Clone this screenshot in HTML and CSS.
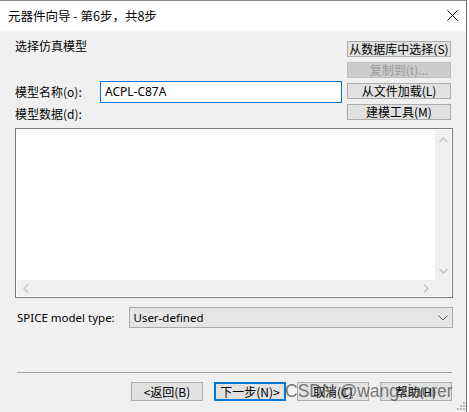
FILE: index.html
```html
<!DOCTYPE html>
<html lang="zh-CN">
<head>
<meta charset="utf-8">
<title>元器件向导</title>
<link rel="stylesheet" href="styles.css">
</head>
<body>
<div class="window">
  <div class="titlebar">
    <span class="title">元器件向导 - 第6步，共8步</span>
    <svg class="close" width="11" height="11" viewBox="0 0 11 11"><path d="M0.5 0.5 L10.5 10.5 M10.5 0.5 L0.5 10.5" stroke="#000" stroke-width="1" fill="none"/></svg>
  </div>
  <div class="content">
    <div class="top">
      <div class="left">
        <div class="heading">选择仿真模型</div>
        <div class="name-row">
          <span class="label">模型名称(o):</span>
          <div class="input">ACPL-C87A</div>
        </div>
        <div class="data-label">模型数据(d):</div>
      </div>
      <div class="actions">
        <div class="btn">从数据库中选择(S)</div>
        <div class="btn disabled">复制到(t)...</div>
        <div class="btn">从文件加载(L)</div>
        <div class="btn">建模工具(M)</div>
      </div>
    </div>
    <div class="textarea">
      <div class="ta-main">
        <div class="ta-white"></div>
        <div class="vscroll">
          <svg width="9" height="6" viewBox="0 0 9 6"><path d="M0.5 5 L4.5 1 L8.5 5" stroke="#c2c2c2" stroke-width="1.4" fill="none"/></svg>
          <svg width="9" height="6" viewBox="0 0 9 6"><path d="M0.5 1 L4.5 5 L8.5 1" stroke="#c2c2c2" stroke-width="1.4" fill="none"/></svg>
        </div>
      </div>
      <div class="hscroll">
        <svg width="6" height="9" viewBox="0 0 6 9"><path d="M5 0.5 L1 4.5 L5 8.5" stroke="#c2c2c2" stroke-width="1.4" fill="none"/></svg>
        <svg width="6" height="9" viewBox="0 0 6 9"><path d="M1 0.5 L5 4.5 L1 8.5" stroke="#c2c2c2" stroke-width="1.4" fill="none"/></svg>
      </div>
    </div>
    <div class="spice-row">
      <span class="spice-label">SPICE model type:</span>
      <div class="select">
        <span>User-defined</span>
        <svg width="10" height="6" viewBox="0 0 10 6"><path d="M0.5 0.5 L5 5 L9.5 0.5" stroke="#555" stroke-width="1" fill="none"/></svg>
      </div>
    </div>
    <div class="sep"></div>
    <div class="footer">
      <div class="fbtn">&lt;返回(B)</div>
      <div class="fbtn default">下一步(N)&gt;</div>
      <div class="fbtn">取消(C)</div>
      <div class="fbtn">帮助(H)</div>
    </div>
  </div>
  <div class="watermark">CSDN @wangxiaorer</div>
  <svg class="grip" width="8" height="8" viewBox="0 0 8 8">
    <rect x="6" y="0" width="2" height="2" fill="#b8b8b8"/>
    <rect x="3" y="3" width="2" height="2" fill="#b8b8b8"/>
    <rect x="6" y="3" width="2" height="2" fill="#b8b8b8"/>
    <rect x="0" y="6" width="2" height="2" fill="#b8b8b8"/>
    <rect x="3" y="6" width="2" height="2" fill="#b8b8b8"/>
    <rect x="6" y="6" width="2" height="2" fill="#b8b8b8"/>
  </svg>
</div>
</body>
</html>
```

FILE: styles.css
```css
html, body {
  margin: 0;
  padding: 0;
  background: #ffffff;
}
body {
  width: 469px;
  height: 412px;
  overflow: hidden;
  font-family: "Noto Sans", "Noto Sans CJK SC", sans-serif;
  font-size: 12px;
  color: #000;
}
.window {
  position: relative;
  width: 466px;
  height: 411px;
  border-top: 1px solid #8a8a8a;
  border-right: 1px solid #6f6f6f;
  background: #f0f0f0;
  overflow: hidden;
}
.titlebar {
  height: 30px;
  background: #fff;
  display: flex;
  align-items: center;
  justify-content: space-between;
  padding: 0 8px 0 8px;
}
.title {
  font-family: "Noto Sans CJK SC", sans-serif;
  font-size: 12.5px;
  line-height: 16px;
}
.close {
  display: block;
  margin-top: -1px;
}
.content {
  padding: 0 13px 0 15px;
}
.top {
  display: flex;
  padding-top: 7px;
}
.left {
  flex: 1;
}
.heading {
  line-height: 16px;
  font-family: "Noto Sans CJK SC", sans-serif;
}
.name-row {
  display: flex;
  align-items: center;
  margin-top: 27px;
}
.label {
  width: 85px;
  line-height: 16px;
  font-family: "Noto Sans CJK SC", sans-serif;
}
.input {
  box-sizing: border-box;
  width: 242px;
  height: 22px;
  border: 1px solid #0078d7;
  background: #fff;
  padding: 0 4px;
  line-height: 20px;
}
.data-label {
  margin-top: 3px;
  line-height: 16px;
  font-family: "Noto Sans CJK SC", sans-serif;
}
.actions {
  display: flex;
  flex-direction: column;
  gap: 5px;
  margin-top: 3px;
  margin-right: 2px;
  width: 104px;
}
.btn {
  box-sizing: border-box;
  height: 16px;
  background: #e1e1e1;
  border: 1px solid #adadad;
  text-align: center;
  line-height: 13px;
  font-family: "Noto Sans CJK SC", sans-serif;
  white-space: nowrap;
  overflow: hidden;
}
.btn.disabled {
  background: #cccccc;
  border-color: #bfbfbf;
  color: #9a9a9a;
}
.textarea {
  box-sizing: border-box;
  margin-top: 6px;
  width: 438px;
  height: 170px;
  border: 1px solid #7a7a7a;
  background: #fff;
  padding: 1px;
  display: flex;
  flex-direction: column;
}
.ta-main {
  flex: 1;
  display: flex;
}
.ta-white {
  flex: 1;
  background: #fff;
}
.vscroll {
  width: 16px;
  background: #f0f0f0;
  display: flex;
  flex-direction: column;
  align-items: center;
  justify-content: space-between;
  padding: 7px 0 6px;
}
.vscroll svg, .hscroll svg {
  display: block;
}
.hscroll {
  height: 16px;
  background: #f0f0f0;
  display: flex;
  align-items: center;
  justify-content: space-between;
  padding: 0 22px 0 6px;
}
.spice-row {
  display: flex;
  align-items: center;
  margin-top: 9px;
  margin-left: 2px;
}
.spice-label {
  width: 113px;
  font-size: 11.5px;
  line-height: 16px;
}
.select {
  box-sizing: border-box;
  width: 325px;
  height: 21px;
  background: #e5e5e5;
  border: 1px solid #acacac;
  display: flex;
  align-items: center;
  justify-content: space-between;
  padding: 0 4px 0 3px;
  font-size: 11.5px;
}
.select svg {
  display: block;
}
.sep {
  margin: 44px 0 0 2px;
  width: 435px;
  height: 1px;
  background: #a0a0a0;
}
.footer {
  display: flex;
  justify-content: flex-end;
  gap: 11px;
  margin-top: 9px;
  margin-right: 1px;
}
.fbtn {
  box-sizing: border-box;
  width: 72px;
  height: 19px;
  background: #e1e1e1;
  border: 1px solid #adadad;
  text-align: center;
  line-height: 17px;
  font-family: "Noto Sans CJK SC", sans-serif;
  white-space: nowrap;
}
.fbtn.default {
  border: 2px solid #0078d7;
  line-height: 15px;
}
.watermark {
  position: absolute;
  left: 285px;
  top: 380px;
  z-index: 2;
  font-family: "Liberation Sans", sans-serif;
  font-size: 17.5px;
  line-height: 20px;
  color: rgba(80, 80, 80, 0.75);
  white-space: nowrap;
  pointer-events: none;
}
.grip {
  position: absolute;
  right: 1px;
  bottom: 2px;
}
```
